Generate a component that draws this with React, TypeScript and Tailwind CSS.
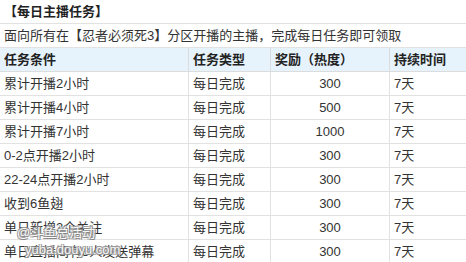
const rows = [
  { cond: '累计开播2小时', type: '每日完成', reward: '300', days: '7天' },
  { cond: '累计开播4小时', type: '每日完成', reward: '500', days: '7天' },
  { cond: '累计开播7小时', type: '每日完成', reward: '1000', days: '7天' },
  { cond: '0-2点开播2小时', type: '每日完成', reward: '300', days: '7天' },
  { cond: '22-24点开播2小时', type: '每日完成', reward: '300', days: '7天' },
  { cond: '收到6鱼翅', type: '每日完成', reward: '300', days: '7天' },
  { cond: '单日新增3个关注', type: '每日完成', reward: '300', days: '7天' },
  { cond: '单日直播间有3人发送弹幕', type: '每日完成', reward: '300', days: '7天' },
]

const cols = 'grid grid-cols-[188px_82px_119px_1fr]'

export default function App() {
  return (
    <div
      className="relative w-[466px] h-[262px] overflow-hidden bg-white text-[13px] text-[#333] leading-none"
      style={{ fontFamily: '"Liberation Sans", "Noto Sans CJK SC", sans-serif' }}
    >
      <div className="h-[24px] flex items-center px-[4px] border-b border-[#e2e2e2] font-bold text-[#222]">
        【每日主播任务】
      </div>
      <div className="h-[24px] flex items-center px-[4px] border-b border-[#e2e2e2]">
        面向所有在【忍者必须死3】分区开播的主播，完成每日任务即可领取
      </div>
      <div className={`${cols} h-[24px] bg-[#e6f3fc] border-b border-[#dcdcdc] font-bold text-[#222]`}>
        <div className="flex items-center px-[4px]">任务条件</div>
        <div className="flex items-center px-[4px] border-l border-[#dcdcdc]">任务类型</div>
        <div className="flex items-center px-[4px] border-l border-[#dcdcdc]">奖励（热度）</div>
        <div className="flex items-center px-[4px] border-l border-[#dcdcdc]">持续时间</div>
      </div>
      {rows.map((r, i) => (
        <div key={i} className={`${cols} h-[24px] border-b border-[#e2e2e2]`}>
          <div className="flex items-center px-[4px] whitespace-nowrap">{r.cond}</div>
          <div className="flex items-center px-[4px] border-l border-[#e2e2e2]">{r.type}</div>
          <div className="flex items-center justify-center border-l border-[#e2e2e2]">{r.reward}</div>
          <div className="flex items-center px-[4px] border-l border-[#e2e2e2]">{r.days}</div>
        </div>
      ))}
      {/* watermark */}
      <div className="absolute left-[17px] top-[224px] text-[13px] leading-[17px] text-white/90 [text-shadow:1px_1px_0_#888,-1px_-1px_0_#999,1px_-1px_0_#999,-1px_1px_0_#999] pointer-events-none">
        <div>@斗鱼总活动</div>
        <div className="pl-[8px]">yuba.douyu.com</div>
      </div>
    </div>
  )
}
